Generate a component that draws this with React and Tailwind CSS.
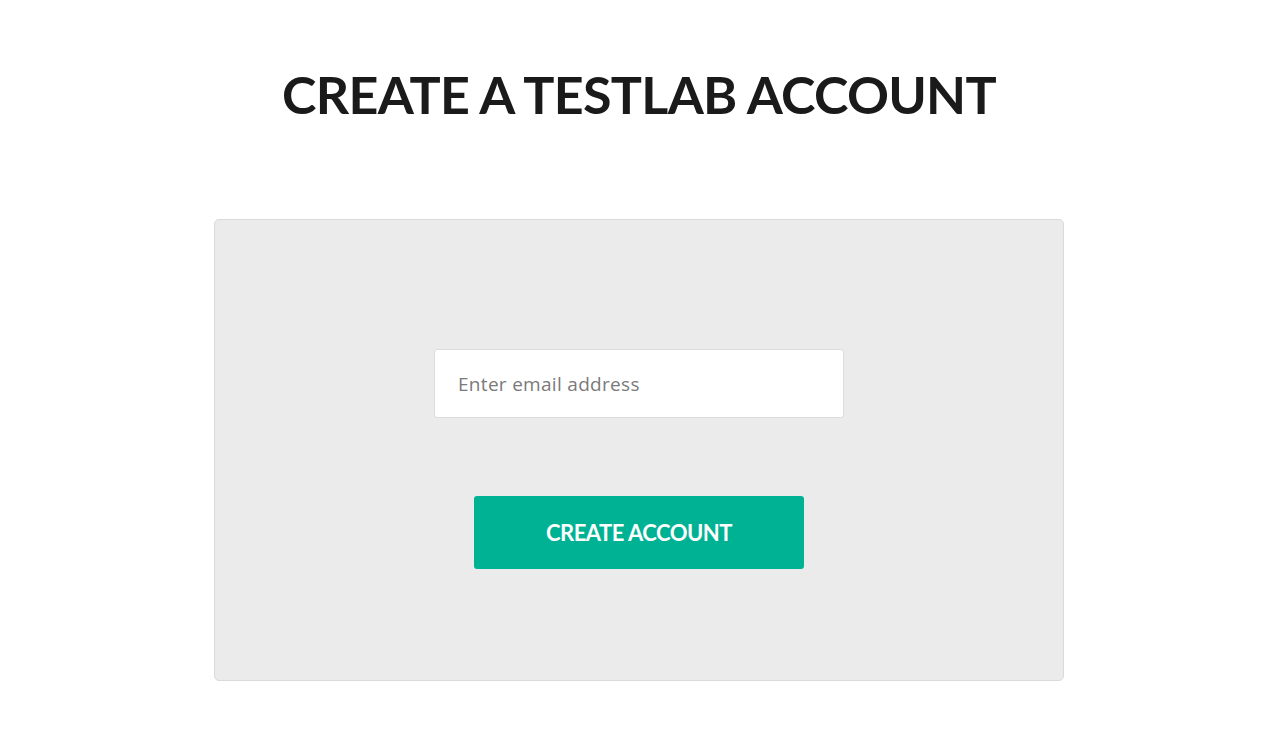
import React, { useState } from 'react';

const App = () => {
  const [email, setEmail] = useState('');

  return (
    <div className="min-h-screen bg-white flex flex-col items-center" style={{ fontFamily: 'Lato, "Open Sans", sans-serif' }}>
      <h1 className="mt-[62px] text-[52px] leading-[64px] font-bold tracking-[-0.7px] text-[#1a1a1a]">
        CREATE A TESTLAB ACCOUNT
      </h1>

      <div className="mt-[93px] w-[850px] h-[462px] bg-[#ebebeb] border border-[#dadada] rounded-[5px] flex flex-col items-center pt-[129px]">
        <input
          type="email"
          value={email}
          onChange={(e) => setEmail(e.target.value)}
          placeholder="Enter email address"
          className="w-[410px] h-[69px] bg-white border border-[#dcdcdc] rounded-[3px] px-[23px] text-[19px] tracking-[0.3px] text-[#333] placeholder:text-[#7a7a7a] outline-none"
          style={{ fontFamily: '"Open Sans", sans-serif' }}
        />
        <button className="mt-[78px] w-[330px] h-[73px] bg-[#00b294] rounded-[3px] text-white text-[22px] font-bold tracking-[-0.5px]">
          CREATE ACCOUNT
        </button>
      </div>
    </div>
  );
};

export default App;
